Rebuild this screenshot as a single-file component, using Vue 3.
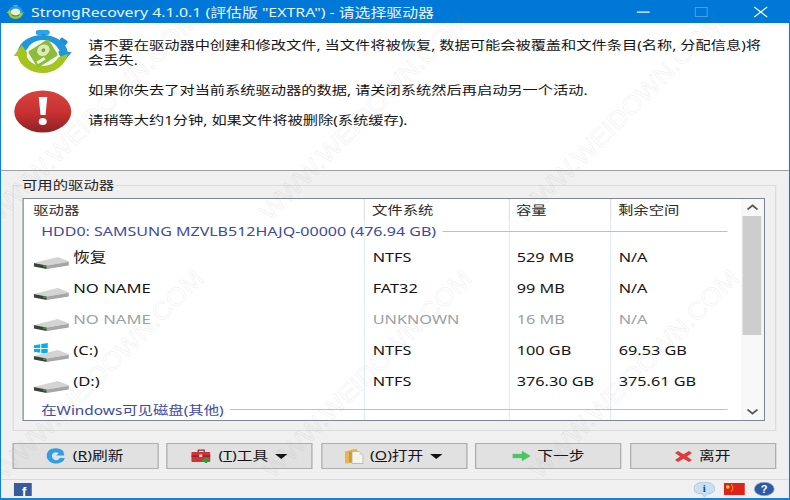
<script setup>
const rows = [
  { name: '恢复', fs: 'NTFS', cap: '529 MB', free: 'N/A' },
  { name: 'NO NAME', fs: 'FAT32', cap: '99 MB', free: 'N/A' },
  { name: 'NO NAME', fs: 'UNKNOWN', cap: '16 MB', free: 'N/A', off: true },
  { name: '(C:)', fs: 'NTFS', cap: '100 GB', free: '69.53 GB', win: true },
  { name: '(D:)', fs: 'NTFS', cap: '376.30 GB', free: '375.61 GB' },
]
const marks = [
  [0, 222], [270, 222], [525, 224],
  [5, 480], [273, 480], [540, 480],
]
</script>

<template>
  <div class="stage">
    <div class="win">
      <header class="title">
        <svg class="ticon" width="15" height="16" viewBox="0 0 18 16" preserveAspectRatio="none">
          <path d="M2 8a7 6 0 0 1 14 0h2l-3 3-3-3h1a4 3.5 0 0 0-8 0z" fill="#2d9ad8" />
          <path d="M16 9a7 6 0 0 1-14 0H0l3-3 3 3H5a4 3.5 0 0 0 8 0z" fill="#a8c62c" />
          <ellipse cx="9" cy="8" rx="4.5" ry="3.6" fill="#e8f2c8" />
          <rect x="7" y="1" width="4" height="1.6" fill="#4db4ee" />
        </svg>
        <span class="ttext">StrongRecovery 4.1.0.1 (評估版 "EXTRA") - 请选择驱动器</span>
        <svg class="wbtn" width="46" height="23" viewBox="0 0 58 23" preserveAspectRatio="none"><rect x="19.500" y="11.500" width="13" height="1.200" fill="#fff" /></svg>
        <svg class="wbtn" width="46" height="23" viewBox="0 0 58 23" preserveAspectRatio="none"><rect x="20.500" y="7.500" width="12" height="9" fill="none" stroke="#4c9fe0" /></svg>
        <svg class="wbtn" width="46" height="23" viewBox="0 0 58 23" preserveAspectRatio="none"><path d="M22 7l13 10M35 7L22 17" stroke="#fff" stroke-width="1.100" /></svg>
      </header>

      <section class="notice">
        <div class="icons">
          <svg width="46.400" height="44" viewBox="0 0 58 44" preserveAspectRatio="none">
            <rect x="22" y="0" width="14" height="5" rx="2.500" fill="#2aa4ea" />
            <rect x="28" y="4" width="3" height="4" fill="#1f86c8" />
            <rect x="46" y="9" width="8" height="5" rx="1.500" transform="rotate(35 50 11)" fill="#1f8ed6" />
            <path d="M4 21C6 11 17 5 29 5s24 7 25 17h4l-8 10-7-11h3c-2-5-9-8-17-8-8 0-14 3-17 8z" fill="#2196dd" />
            <path d="M54 24c-2 11-13 19-25 19S6 36 4 26H0l8-11 8 11h-3c2 6 8 9 16 9 8 0 13-3 16-8z" fill="#a4c41f" />
            <ellipse cx="29" cy="23" rx="16" ry="13" fill="#f3f8ea" />
            <g transform="rotate(-32 29 23)">
              <rect x="17" y="14" width="24" height="19" rx="2" fill="#8dbb3a" />
              <ellipse cx="31" cy="21" rx="6.500" ry="5.500" fill="#dcebb8" />
              <ellipse cx="31" cy="21" rx="2" ry="1.700" fill="#7aa82c" />
              <rect x="19" y="27" width="9" height="3" fill="#eef5d8" />
            </g>
          </svg>
          <svg class="alert" width="46.400" height="43" viewBox="0 0 58 43" preserveAspectRatio="none">
            <defs>
              <linearGradient id="redg" x1="0" y1="0" x2="0" y2="1">
                <stop offset="0" stop-color="#d8423e" />
                <stop offset="0.550" stop-color="#c6302f" />
                <stop offset="1" stop-color="#8d2226" />
              </linearGradient>
            </defs>
            <ellipse cx="29" cy="21.500" rx="28.500" ry="21" fill="url(#redg)" />
            <path d="M25 7h8.500l-1.700 18h-5z" fill="#fff" />
            <ellipse cx="29" cy="31.500" rx="4" ry="3.600" fill="#fff" />
          </svg>
        </div>
        <div class="msg">
          <p>请不要在驱动器中创建和修改文件, 当文件将被恢复, 数据可能会被覆盖和文件条目(名称, 分配信息)将会丢失.</p>
          <p>如果你失去了对当前系统驱动器的数据, 请关闭系统然后再启动另一个活动.</p>
          <p>请稍等大约1分钟, 如果文件将被删除(系统缓存).</p>
        </div>
      </section>

      <section class="panel">
        <div class="group">
          <span class="glabel">可用的驱动器</span>
          <div class="list">
            <div class="main">
              <div class="thead">
                <div class="th first">驱动器</div>
                <div class="th">文件系统</div>
                <div class="th">容量</div>
                <div class="th">剩余空间</div>
              </div>
              <div class="tbody">
                <div class="sep top"><span class="hdd">HDD0: SAMSUNG MZVLB512HAJQ-00000 (476.94 GB)</span><i></i></div>
                <div v-for="(r, i) in rows" :key="i" class="row" :class="{ off: r.off }">
                  <div class="name">
                    <svg width="28.800" height="22" viewBox="0 0 36 22" preserveAspectRatio="none">
                      <g v-if="r.win" fill="#00b2f2">
                        <path d="M0 2.200l6.500-1V5H0zM7.500 1l6.500-1v5H7.500zM0 6h6.500v3.800l-6.500-1zM7.500 6H14v5l-6.500-1z" />
                      </g>
                      <path d="M0 13L24 7l12 4.500L13 15.500z" fill="#d4d4d4" />
                      <path d="M0 13l13 2.500v3.500L0 16.500z" fill="#3c403c" />
                      <path d="M13 15.500L36 11.500v4L13 19z" fill="#a6a6a6" />
                      <rect x="9.500" y="15.500" width="2.500" height="1.300" fill="#35c043" />
                    </svg>
                    <span>{{ r.name }}</span>
                  </div>
                  <div class="cell">{{ r.fs }}</div>
                  <div class="cell">{{ r.cap }}</div>
                  <div class="cell">{{ r.free }}</div>
                </div>
                <div class="sep bottom"><span class="other">在Windows可见磁盘(其他)</span><i></i></div>
              </div>
            </div>
            <div class="scroll">
              <svg class="chev" width="14" height="17" viewBox="0 0 14 17"><path d="M3 10.500l4-4 4 4" fill="none" stroke="#555" stroke-width="1.600" /></svg>
              <div class="thumb"></div>
              <div class="track"></div>
              <svg class="chev" width="14" height="17" viewBox="0 0 14 17"><path d="M3 6.500l4 4 4-4" fill="none" stroke="#555" stroke-width="1.600" /></svg>
            </div>
          </div>
        </div>

        <div class="actions">
          <button>
            <svg width="15.200" height="16" viewBox="0 0 19 16" preserveAspectRatio="none">
              <path d="M17 3C14 0 9-.5 5 1S-.5 7 1 10.500 7 16 11 15.500s7-2.500 7.500-5.500h-5c-1 2-3 2.500-5 2S5 9 6 6.500 10 3.500 12.500 5L10 7.500h8z" fill="#2e9fe6" />
            </svg>
            <span>(<u>R</u>)刷新</span>
          </button>
          <button>
            <svg width="16" height="14" viewBox="0 0 20 14" preserveAspectRatio="none">
              <path d="M7 3V1.200h6V3" fill="none" stroke="#7a3a3a" stroke-width="1.300" />
              <rect x="0" y="3" width="19" height="10" rx="1" fill="#cf3339" />
              <rect x="0" y="6.500" width="19" height="1.200" fill="#8c1f24" />
              <rect x="8" y="5.500" width="3" height="2.500" fill="#e9e2c8" />
              <path d="M13.500 8h2.500v2.200h2.500v2.400H16V14h-2.500v-1.400H11v-2.400h2.500z" fill="#1fa83a" />
            </svg>
            <span>(<u>T</u>)工具</span>
            <i class="caret"></i>
          </button>
          <button>
            <svg width="14.400" height="15" viewBox="0 0 18 15" preserveAspectRatio="none">
              <path d="M0 2.500L9 0h3v2.500H7V14l-7 .5z" fill="#e6b552" />
              <path d="M4 2.500h4v11H4z" fill="#c9993c" />
              <path d="M7 2.500h7.500L18 6v8.500H7z" fill="#f4f4ec" stroke="#aeb2a6" stroke-width=".8" />
              <path d="M14.500 2.500V6H18" fill="#d8dbd0" />
            </svg>
            <span>(<u>O</u>)打开</span>
            <i class="caret"></i>
          </button>
          <button>
            <svg width="14.400" height="10" viewBox="0 0 18 10" preserveAspectRatio="none">
              <path d="M0 3h9.500V0L18 5l-8.500 5V7H0z" fill="#48c85f" stroke="#6bb97a" stroke-width=".4" />
            </svg>
            <span>下一步</span>
          </button>
          <button>
            <svg width="13.600" height="11" viewBox="0 0 17 11" preserveAspectRatio="none">
              <path d="M3 0l5.500 3.300L14 0l3 2-5 3.500 5 3.500-3 2-5.500-3.300L3 11 0 9l5-3.500L0 2z" fill="#dc3c3c" />
            </svg>
            <span>离开</span>
          </button>
        </div>
      </section>

      <footer class="status">
        <svg width="14.400" height="13" viewBox="0 0 18 13" preserveAspectRatio="none">
          <rect width="18" height="13" fill="#3a5a9e" />
          <text x="10.500" y="12.800" fill="#fff" font-size="13" font-weight="700" text-anchor="middle" font-family="Liberation Sans, sans-serif">f</text>
        </svg>
        <span class="spacer"></span>
        <svg width="16.800" height="15" viewBox="0 0 21 15" preserveAspectRatio="none">
          <path d="M10.500 0C16 0 21 2.500 21 6.500S16.500 12 13.500 12L10.500 15 9 12C4.500 12 0 10.500 0 6.500S5 0 10.500 0z" fill="#c8e0f2" stroke="#92b6d4" stroke-width=".6" />
          <text x="10.500" y="10.500" fill="#1d4f9c" font-size="11" font-weight="700" text-anchor="middle" font-family="Liberation Serif, serif">i</text>
        </svg>
        <svg class="flag" width="16.800" height="12" viewBox="0 0 21 12" preserveAspectRatio="none">
          <rect width="21" height="12" fill="#e0211c" />
          <circle cx="4" cy="4" r="1.800" fill="#f6d82a" />
          <circle cx="8" cy="2" r=".7" fill="#f6d82a" />
          <circle cx="9" cy="4" r=".7" fill="#f6d82a" />
          <circle cx="9" cy="6" r=".7" fill="#f6d82a" />
          <circle cx="8" cy="8" r=".7" fill="#f6d82a" />
        </svg>
        <svg width="16.800" height="14" viewBox="0 0 21 14" preserveAspectRatio="none">
          <ellipse cx="10.500" cy="7" rx="10" ry="6.800" fill="#2a5aa8" stroke="#a0aec0" stroke-width=".8" />
          <text x="10.500" y="11" fill="#fff" font-size="11" font-weight="700" text-anchor="middle" font-family="Liberation Sans, sans-serif">?</text>
        </svg>
      </footer>
    </div>

    <svg class="wm" width="790" height="500" viewBox="0 0 790 500">
      <text
        v-for="(m, i) in marks"
        :key="i"
        :transform="`translate(${m[0]} ${m[1]}) rotate(-45)`"
        textLength="283"
        lengthAdjust="spacingAndGlyphs"
        font-size="25"
        font-family="Liberation Sans, sans-serif"
        fill="none"
        stroke="#8a8a8a"
        stroke-opacity="0.130"
        stroke-width="0.800"
      >WWW.WEIDOWN.COM</text>
    </svg>
  </div>
</template>

<style>
body { margin: 0; }
</style>

<style scoped>
.stage {
  position: relative;
  width: 790px;
  height: 500px;
  overflow: hidden;
  background: #fff;
  font-family: "Noto Sans", "Noto Sans CJK SC", sans-serif;
  font-size: 12.300px;
  color: #141414;
}
.win {
  width: 632px;
  height: 500px;
  box-sizing: border-box;
  display: flex;
  flex-direction: column;
  transform: scaleX(1.250);
  transform-origin: left top;
  border-left: 1px solid #0f7fd8;
  border-right: 1px solid #0f7fd8;
  border-bottom: 2px solid #1581d6;
}
.title {
  flex: 0 0 23px;
  margin: 0 -1px;
  display: flex;
  align-items: center;
  background: #0078d7;
  color: #eaf4fc;
  font-size: 12.700px;
  padding-left: 4.800px;
}
.ticon { flex: none; margin-right: 5px; }
.ttext { flex: 1; white-space: nowrap; }
.wbtn { flex: none; }

.notice {
  flex: 0 0 147px;
  box-sizing: border-box;
  display: flex;
  background: #fff;
}
.icons {
  flex: none;
  width: 69.400px;
  padding: 7px 0 0 10.200px;
  box-sizing: border-box;
  display: flex;
  flex-direction: column;
  align-items: flex-start;
}
.alert { margin-top: 16px; }
.msg {
  width: 548px;
  padding-top: 14.500px;
  line-height: 15px;
  font-size: 12.200px;
}
.msg p { margin: 0 0 15px; }

.panel {
  flex: 1;
  min-height: 0;
  box-sizing: border-box;
  display: flex;
  flex-direction: column;
  background: #f0f0f0;
  border-top: 1px solid #a0a0a0;
  border-bottom: 1px solid #d9d9d9;
  padding: 14px 10.200px 0 8.600px;
}
.group {
  position: relative;
  height: 246px;
  box-sizing: border-box;
  border: 1px solid #dcdcdc;
  padding: 12px 7.800px 9px;
}
.glabel {
  position: absolute;
  left: 7px;
  top: -8px;
  padding-right: 2px;
  line-height: 15px;
  background: #f0f0f0;
  color: #222;
}
.list {
  height: 100%;
  box-sizing: border-box;
  display: flex;
  background: #fff;
  border: 1px solid #7d8692;
}
.main { flex: 1; min-width: 0; display: flex; flex-direction: column; }
.thead, .row {
  display: grid;
  grid-template-columns: 272px 115.200px 81.600px 1fr;
}
.thead { flex: 0 0 22px; }
.th {
  display: flex;
  align-items: center;
  padding-left: 5.200px;
  border-left: 1px solid #e3e3e3;
  color: #2a2a2a;
}
.th.first { border-left: 0; padding-left: 7.200px; }
.tbody {
  flex: 1;
  min-height: 0;
  background-image:
    linear-gradient(#e3eefa, #e3eefa),
    linear-gradient(#e3eefa, #e3eefa),
    linear-gradient(#e3eefa, #e3eefa);
  background-repeat: no-repeat;
  background-size: 1px 100%;
  background-position: 272px 0, 387.200px 0, 468.800px 0;
}
.sep {
  display: flex;
  align-items: center;
  padding: 0 10.400px 0 13.600px;
  color: #3d4a9e;
  white-space: nowrap;
}
.sep i { flex: 1; height: 1px; background: #b4c0dc; margin-left: 4.800px; }
.sep.top { height: 20px; }
.sep.bottom { height: 20px; margin-top: 3.500px; }
.hdd { font-size: 12.800px; }
.row { height: 31px; align-items: center; }
.row.off { color: #9a9fa5; }
.name {
  display: flex;
  align-items: center;
  padding-left: 7.200px;
  gap: 3.200px;
  font-size: 13.300px;
}
.name svg { margin-top: 8px; flex: none; }
.cell { padding-left: 6.800px; font-size: 13px; }
.scroll {
  flex: 0 0 18.400px;
  display: flex;
  flex-direction: column;
  align-items: center;
  background: #f8f8f8;
}
.chev { flex: none; }
.thumb { flex: 0 0 119px; width: 15.200px; background: #cdcdcd; }
.track { flex: 1; }

.actions {
  display: grid;
  grid-template-columns: repeat(5, 1fr);
  gap: 6.400px;
  margin-top: 12px;
  height: 26px;
}
button {
  display: flex;
  align-items: center;
  justify-content: center;
  gap: 5.600px;
  padding: 0;
  background: #e1e1e1;
  border: 1px solid #adadad;
  font: inherit;
  font-size: 12.600px;
  color: #141414;
}
button span { margin-bottom: 3px; }
u { text-underline-offset: 1px; }
.caret {
  width: 0;
  height: 0;
  border-left: 5px solid transparent;
  border-right: 5px solid transparent;
  border-top: 5px solid #111;
}

.status {
  flex: 0 0 18px;
  display: flex;
  align-items: center;
  gap: 7px;
  padding: 0 11.500px 0 10.200px;
  background: #f0f0f0;
}
.spacer { flex: 1; }
.wm { position: absolute; left: 0; top: 0; pointer-events: none; }
</style>
